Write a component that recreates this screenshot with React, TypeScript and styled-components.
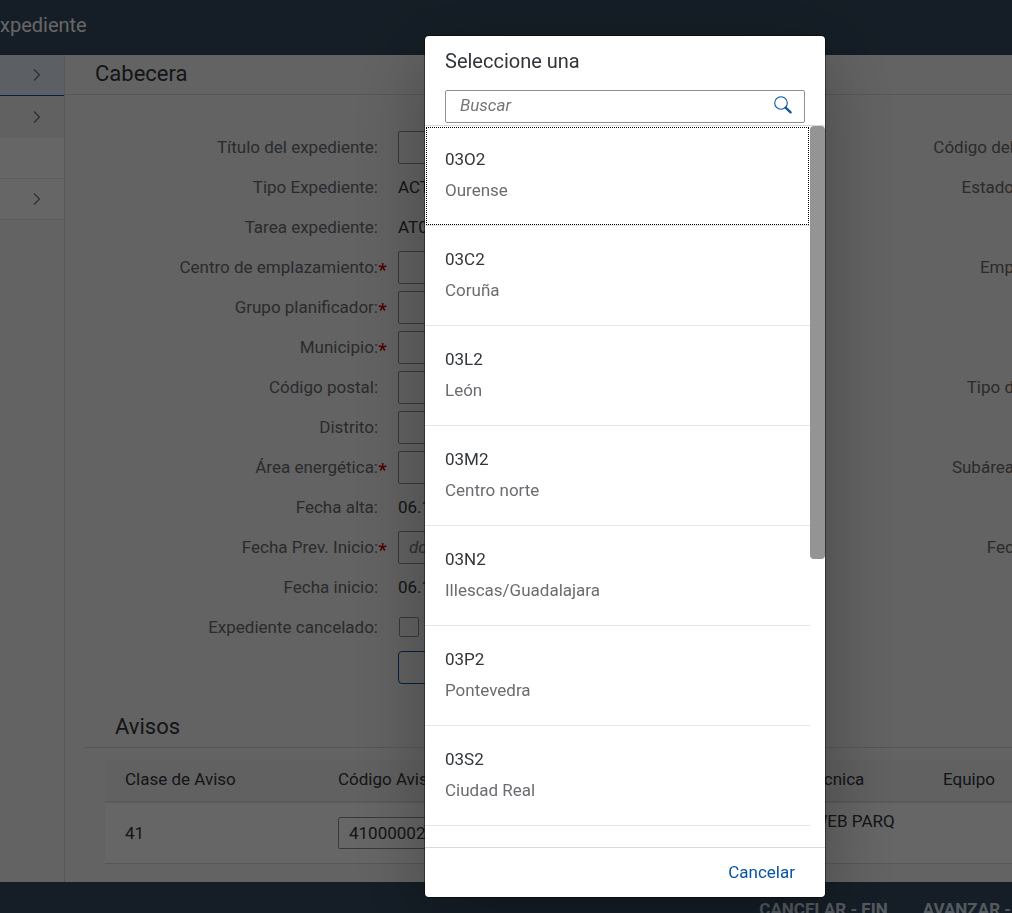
import React from "react";
import styled, { createGlobalStyle } from "styled-components";

const GlobalStyle = createGlobalStyle`
  *, *::before, *::after { box-sizing: border-box; }
  html, body { margin: 0; height: 100%; overflow: hidden; }
  body, input, button {
    font-family: Roboto, "Liberation Sans", sans-serif;
    font-size: 17px;
    color: #32363a;
  }
`;

const Shell = styled.div`
  height: 100vh;
  overflow: hidden;
  display: flex;
  flex-direction: column;
  background: #f7f7f7;
`;

const ShellBar = styled.header`
  flex: none;
  height: 55px;
  display: flex;
  align-items: center;
  padding-bottom: 6px;
  background: #354a5f;
  color: #fff;
  font-size: 20px;
`;

const Body = styled.div`
  flex: none;
  display: flex;
`;

const Sidebar = styled.nav`
  flex: none;
  width: 65px;
  border-right: 1px solid #d9d9d9;
`;

const SideItem = styled.button<{ $tone?: "selected" | "muted" }>`
  display: flex;
  align-items: center;
  justify-content: flex-end;
  width: 100%;
  height: ${(p) => (p.$tone === "muted" ? 42 : 41)}px;
  padding: 0 23px 0 0;
  border: 0;
  border-bottom: 1px solid
    ${(p) => (p.$tone === "selected" ? "#0854a0" : p.$tone === "muted" ? "#f2f2f2" : "#e5e5e5")};
  background: ${(p) =>
    p.$tone === "selected" ? "#e5f0fa" : p.$tone === "muted" ? "#f2f2f2" : "#fff"};
`;

const Main = styled.main`
  flex: 1;
  min-width: 0;
`;

const PageTitle = styled.h1`
  margin: 0;
  height: 40px;
  padding: 0 30px;
  border-bottom: 1px solid #d9d9d9;
  font-size: 22px;
  font-weight: 400;
  line-height: 38px;
`;

const Form = styled.form`
  padding-top: 32px;
`;

const FormRow = styled.div`
  display: flex;
  align-items: center;
  height: 40px;
  white-space: nowrap;
  overflow: hidden;
`;

const Label = styled.label<{ $required?: boolean }>`
  flex: none;
  width: 323px;
  padding-right: ${(p) => (p.$required ? 1 : 10)}px;
  margin-right: 10px;
  text-align: right;
  line-height: 20px;
  color: #6a6d70;
`;

const Star = styled.span`
  display: inline-block;
  width: 9px;
  text-align: center;
  vertical-align: -3px;
  color: #d00000;
  font-weight: 700;
  font-size: 18px;
  line-height: 16px;
`;

const Field = styled.div`
  flex: none;
  width: 260px;
`;

const TextBox = styled.input`
  display: block;
  width: 100%;
  height: 32px;
  padding: 0 10px;
  border: 1px solid #89919a;
  border-radius: 2px;
  background: #fff;
  &::placeholder {
    color: #74777a;
    font-style: italic;
    opacity: 1;
  }
`;

const FormBox = styled(TextBox)`
  height: 33px;
  background: #f7f7f7;
`;

const Check = styled.input`
  appearance: none;
  display: block;
  width: 20px;
  height: 20px;
  margin: 0 1px;
  border: 1px solid #89919a;
  border-radius: 2px;
`;

const OutlineButton = styled.button`
  display: block;
  width: 100%;
  height: 33px;
  border: 1px solid #0854a0;
  border-radius: 4px;
  background: transparent;
`;

const EndLabel = styled.span`
  margin: 0 -2px 0 auto;
  color: #6a6d70;
`;

const Notices = styled.section`
  margin-left: 20px;
  padding-bottom: 18px;
`;

const SectionTitle = styled.h2`
  margin: 0;
  padding: 20px 30px 0;
  height: 61px;
  border-bottom: 1px solid #d9d9d9;
  font-size: 22px;
  font-weight: 400;
  line-height: 40px;
`;

const TableArea = styled.div`
  padding: 12px 0 0 20px;
`;

const Table = styled.table`
  width: 100%;
  table-layout: fixed;
  border-collapse: separate;
  border-spacing: 0;
  th, td {
    padding: 0 0 0 20px;
    text-align: left;
    font-weight: 400;
    white-space: nowrap;
    overflow: hidden;
  }
  th {
    height: 43px;
    padding-bottom: 3px;
    background: #f2f2f2;
    border-bottom: 2px solid #e0e0e0;
  }
  td {
    height: 61px;
    padding-bottom: 1px;
    background: #fff;
    border-bottom: 1px solid #d9d9d9;
    line-height: 24px;
  }
`;

const Col = styled.col<{ $w?: number }>`
  width: ${(p) => (p.$w ? `${p.$w}px` : "auto")};
`;

const ActionBar = styled.footer`
  flex: none;
  height: 53px;
  display: flex;
  align-items: center;
  justify-content: flex-end;
  gap: 35px;
  padding-right: 1px;
  background: #354a5f;
`;

const BarButton = styled.button`
  padding: 0;
  border: 0;
  background: none;
  color: #d1e0ee;
  font-weight: 700;
  white-space: nowrap;
`;

const Overlay = styled.div`
  position: fixed;
  inset: 0;
  display: flex;
  justify-content: flex-end;
  padding: 36px 187px 16px 16px;
  background: rgba(0, 0, 0, 0.6);
`;

const Dialog = styled.div`
  width: 400px;
  display: flex;
  flex-direction: column;
  border-radius: 4px;
  overflow: hidden;
  background: #fff;
  box-shadow: 0 0 0 1px rgba(0, 0, 0, 0.42), 0 20px 80px 0 rgba(0, 0, 0, 0.3);
`;

const DialogHead = styled.div`
  flex: none;
  padding: 0 20px 2px;
  border-bottom: 1px solid #d9d9d9;
`;

const DialogTitle = styled.h2`
  margin: 0;
  font-size: 20px;
  font-weight: 400;
  line-height: 50px;
  height: 54px;
`;

const SearchField = styled.div`
  display: flex;
  height: 33px;
  border: 1px solid #89919a;
  border-radius: 2px;
`;

const SearchInput = styled(TextBox)`
  flex: 1;
  min-width: 0;
  height: 28px;
  padding: 0 14px;
  border: 0;
  outline: 0;
`;

const SearchButton = styled.button`
  display: flex;
  align-items: center;
  width: 40px;
  padding: 0 10px 4px;
  border: 0;
  background: none;
  color: #0854a0;
`;

const ListArea = styled.div`
  flex: 1;
  min-height: 0;
  display: flex;
`;

const List = styled.ul`
  flex: 1;
  margin: 0;
  padding: 0;
  overflow: hidden;
  list-style: none;
`;

const Item = styled.li<{ $focused?: boolean }>`
  display: flex;
  flex-direction: column;
  gap: 11px;
  height: 100px;
  padding: 23px 20px 0;
  border-bottom: 1px solid #e5e5e5;
  line-height: 20px;
  outline: ${(p) => (p.$focused ? "1px dotted #000" : "0")};
  outline-offset: -2px;
`;

const Description = styled.span`
  color: #6a6d70;
`;

const ScrollTrack = styled.div`
  flex: none;
  width: 15px;
`;

const ScrollThumb = styled.div`
  height: 60%;
  border-radius: 4px;
  background: #949494;
`;

const DialogFoot = styled.div`
  flex: none;
  height: 50px;
  display: flex;
  align-items: center;
  justify-content: flex-end;
  padding: 0 30px 2px;
  border-top: 1px solid #d9d9d9;
`;

const LinkButton = styled.button`
  padding: 0;
  border: 0;
  background: none;
  color: #0854a0;
`;

const Chevron = () => (
  <svg width="8" height="12" viewBox="0 0 8 12" fill="none" stroke="#6a6d70" strokeWidth="1.1" aria-hidden="true">
    <path d="M1 .5 6.5 6 1 11.5" />
  </svg>
);

const SearchIcon = () => (
  <svg width="18" height="18" viewBox="0 0 18 18" fill="none" stroke="currentColor" aria-hidden="true">
    <circle cx="7" cy="7" r="6.3" strokeWidth="1.1" />
    <path d="M11.6 11.6 16.6 16.4" strokeWidth="2.2" strokeLinecap="round" />
  </svg>
);

type Row = {
  id: string;
  label: string;
  kind: "box" | "text" | "check";
  value?: string;
  hint?: string;
  required?: boolean;
  end?: string;
};

const rows: Row[] = [
  { id: "titulo", label: "Título del expediente:", kind: "box", end: "Código del" },
  { id: "tipo", label: "Tipo Expediente:", kind: "text", value: "ACT", end: "Estado" },
  { id: "tarea", label: "Tarea expediente:", kind: "text", value: "AT0" },
  { id: "centro", label: "Centro de emplazamiento:", kind: "box", required: true, end: "Emp" },
  { id: "grupo", label: "Grupo planificador:", kind: "box", required: true },
  { id: "municipio", label: "Municipio:", kind: "box", required: true },
  { id: "postal", label: "Código postal:", kind: "box", end: "Tipo d" },
  { id: "distrito", label: "Distrito:", kind: "box" },
  { id: "area", label: "Área energética:", kind: "box", required: true, end: "Subárea" },
  { id: "alta", label: "Fecha alta:", kind: "text", value: "06.1" },
  { id: "prevista", label: "Fecha Prev. Inicio:", kind: "box", hint: "dd", required: true, end: "Fec" },
  { id: "inicio", label: "Fecha inicio:", kind: "text", value: "06.1" },
  { id: "cancelado", label: "Expediente cancelado:", kind: "check" },
];

const options = [
  ["03O2", "Ourense"],
  ["03C2", "Coruña"],
  ["03L2", "León"],
  ["03M2", "Centro norte"],
  ["03N2", "Illescas/Guadalajara"],
  ["03P2", "Pontevedra"],
  ["03S2", "Ciudad Real"],
];

export default function App() {
  return (
    <>
      <GlobalStyle />
      <Shell>
        <ShellBar>xpediente</ShellBar>
        <Body>
          <Sidebar>
            <SideItem $tone="selected"><Chevron /></SideItem>
            <SideItem $tone="muted"><Chevron /></SideItem>
            <SideItem />
            <SideItem><Chevron /></SideItem>
          </Sidebar>
          <Main>
            <PageTitle>Cabecera</PageTitle>
            <Form>
              {rows.map((r) => (
                <FormRow key={r.id}>
                  <Label htmlFor={r.id} $required={r.required}>
                    {r.label}
                    {r.required && <Star>*</Star>}
                  </Label>
                  <Field>
                    {r.kind === "box" && <FormBox id={r.id} placeholder={r.hint} />}
                    {r.kind === "text" && <output id={r.id}>{r.value}</output>}
                    {r.kind === "check" && <Check id={r.id} type="checkbox" />}
                  </Field>
                  {r.end && <EndLabel>{r.end}</EndLabel>}
                </FormRow>
              ))}
              <FormRow>
                <Label as="span" />
                <Field><OutlineButton type="button" /></Field>
              </FormRow>
            </Form>
            <Notices>
              <SectionTitle>Avisos</SectionTitle>
              <TableArea>
                <Table>
                  <colgroup>
                    <Col $w={213} />
                    <Col $w={213} />
                    <Col $w={179} />
                    <Col $w={213} />
                    <Col />
                  </colgroup>
                  <thead>
                    <tr>
                      <th>Clase de Aviso</th>
                      <th>Código Aviso</th>
                      <th />
                      <th>Ubicación técnica</th>
                      <th>Equipo</th>
                    </tr>
                  </thead>
                  <tbody>
                    <tr>
                      <td>41</td>
                      <td><TextBox aria-label="Código Aviso" defaultValue="41000002" /></td>
                      <td />
                      <td>SUBEST. 1 WEB PARQ<br />&nbsp;</td>
                      <td />
                    </tr>
                  </tbody>
                </Table>
              </TableArea>
            </Notices>
          </Main>
        </Body>
        <ActionBar>
          <BarButton>CANCELAR - FIN</BarButton>
          <BarButton>AVANZAR -</BarButton>
        </ActionBar>
      </Shell>
      <Overlay>
        <Dialog role="dialog" aria-modal="true" aria-labelledby="dialog-title">
          <DialogHead>
            <DialogTitle id="dialog-title">Seleccione una</DialogTitle>
            <SearchField>
              <SearchInput type="text" placeholder="Buscar" aria-label="Buscar" />
              <SearchButton aria-label="Buscar"><SearchIcon /></SearchButton>
            </SearchField>
          </DialogHead>
          <ListArea>
            <List>
              {options.map(([code, name], i) => (
                <Item key={code} $focused={i === 0}>
                  <span>{code}</span>
                  <Description>{name}</Description>
                </Item>
              ))}
            </List>
            <ScrollTrack><ScrollThumb /></ScrollTrack>
          </ListArea>
          <DialogFoot>
            <LinkButton>Cancelar</LinkButton>
          </DialogFoot>
        </Dialog>
      </Overlay>
    </>
  );
}
